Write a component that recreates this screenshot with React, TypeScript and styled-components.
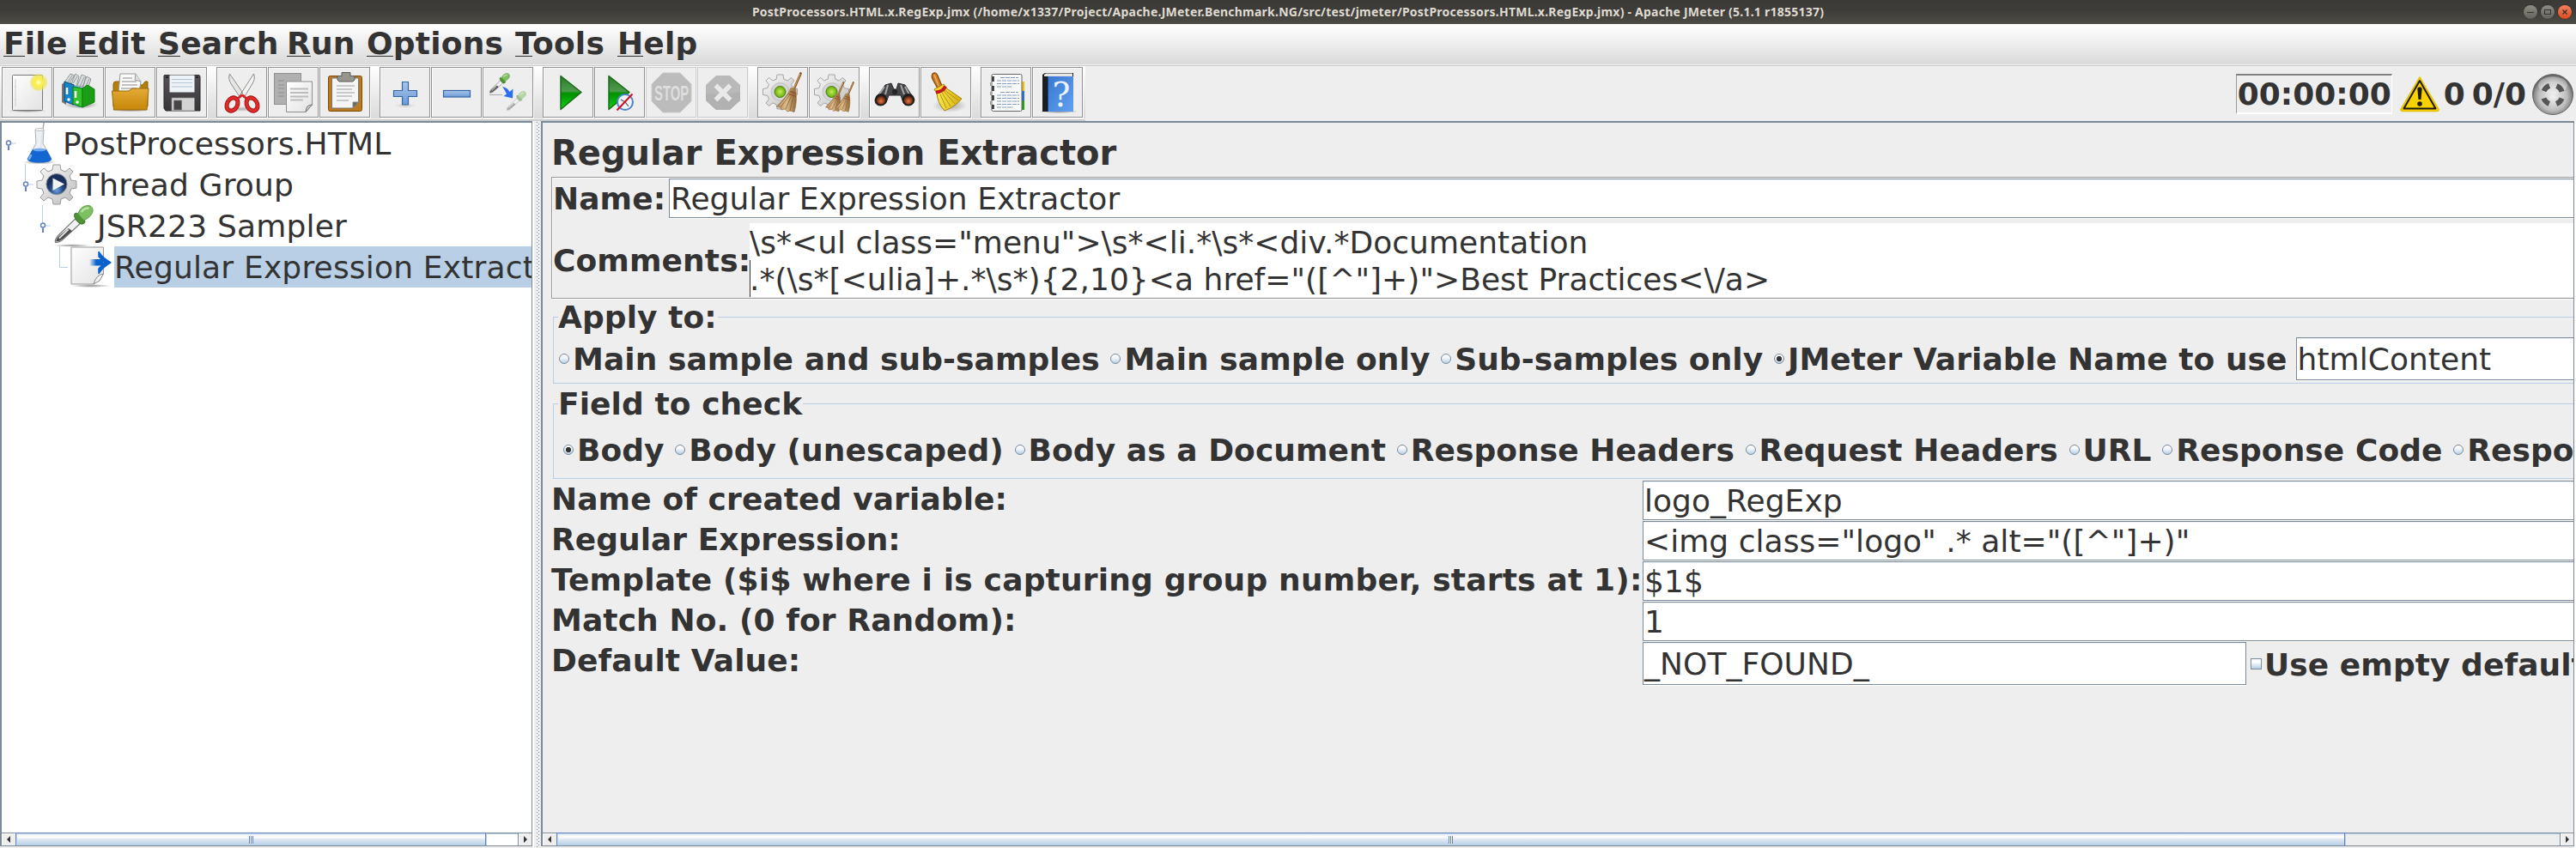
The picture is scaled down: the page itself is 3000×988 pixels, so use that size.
import React from 'react';
import styled, { createGlobalStyle, css } from 'styled-components';

const steel = '#7a8a99';
const ink = '#333333';
const pale = '#b8cfe5';

const GlobalStyle = createGlobalStyle`
  * { box-sizing: border-box; }
  html, body { margin: 0; padding: 0; background: #fff; overflow: hidden; }
  body { font-family: "DejaVu Sans", sans-serif; font-size: 36px; color: ${ink}; }
`;

const Window = styled.div`
  width: 3000px;
  height: 988px;
  display: flex;
  flex-direction: column;
  background: #eeeeee;
  overflow: hidden;
  white-space: nowrap;
`;

/* ---------- title bar ---------- */
const TitleBar = styled.header`
  height: 28px;
  flex: none;
  display: grid;
  grid-template-columns: 1fr auto 1fr;
  align-items: center;
  background: linear-gradient(#3b3a36, #3d3c38 40%, #4d4b45);
`;
const WindowTitle = styled.h1`
  grid-column: 2;
  margin: 0;
  font: bold 14px/28px "Noto Sans", sans-serif;
  letter-spacing: 0.23px;
  color: #dfdbd2;
`;
const WindowButtons = styled.div`
  grid-column: 3;
  justify-self: end;
  display: flex;
  gap: 4px;
  padding-right: 5px;
`;
const RoundButton = styled.span<{ $close?: boolean }>`
  width: 16px;
  height: 16px;
  border-radius: 50%;
  display: flex;
  background: ${p => (p.$close ? 'linear-gradient(#f58162, #df4a1c)' : 'linear-gradient(#8e8c84, #63625c)')};
  box-shadow: 0 0 0 0.5px #2d2c29;
`;

/* ---------- menu bar ---------- */
const MenuBar = styled.nav`
  height: 49px;
  flex: none;
  display: flex;
  padding-left: 4px;
  background: linear-gradient(#ffffff, #dadada 47px, #eeeeee 47px, #eeeeee 48px, #cccccc 48px);
`;
const MenuItem = styled.span<{ $width: number }>`
  width: ${p => p.$width}px;
  font-weight: bold;
  line-height: 46px;
  letter-spacing: 0.2px;
`;
const Mnemonic = styled.span`
  background: linear-gradient(${ink}, ${ink}) 0 35px / 100% 1px no-repeat;
`;

/* ---------- tool bar ---------- */
const ToolRow = styled.div`
  height: 64px;
  flex: none;
  display: flex;
  justify-content: space-between;
`;
const Tools = styled.div`
  width: 1264px;
  padding: 1px 0 0 2px;
  display: flex;
  gap: 11px;
  background: linear-gradient(#ffffff, #dadada 61px, #f4f4f4 61px, #f4f4f4 62px, #cccccc 62px);
`;
const ToolGroup = styled.div`
  display: flex;
  gap: 1px;
`;
const ToolButton = styled.button<{ $off?: boolean }>`
  width: 59px;
  height: 59px;
  margin: 0;
  padding: 5px 0 0 5px;
  display: flex;
  align-items: flex-start;
  border: 1px solid ${p => (p.$off ? '#cccccc' : '#919191')};
  background: #eeeeee;
  box-shadow: 1px 1px 0 ${p => (p.$off ? '#f2f2f2' : '#ffffff')}, inset 1px 1px 0 ${p => (p.$off ? '#eee' : '#fafafa')};
`;
const Glyph = styled.svg`
  display: block;
  flex: none;
  overflow: visible;
`;
const Status = styled.div`
  display: flex;
  align-items: center;
  font-weight: bold;
  padding: 1px 3px 0 0;
`;
const Timer = styled.div`
  width: 182px;
  height: 47px;
  margin-right: 9px;
  padding-left: 1px;
  line-height: 44px;
  border: 1px solid #999;
  border-top-width: 2px;
  border-top-color: #808080;
  border-right-color: #fff;
  border-bottom: 2px solid #fff;
`;
const Count = styled.span<{ $left: number; $right: number }>`
  margin-left: ${p => p.$left}px;
  margin-right: ${p => p.$right}px;
  line-height: 44px;
`;

/* ---------- split panes ---------- */
const Split = styled.main`
  height: 847px;
  flex: none;
  display: flex;
`;
const Pane = styled.section<{ $width: number; $white?: boolean }>`
  width: ${p => p.$width}px;
  height: 845px;
  flex: none;
  display: flex;
  flex-direction: column;
  overflow: hidden;
  border: solid ${steel};
  border-width: 2px 1px 0 2px;
  background: ${p => (p.$white ? '#fff' : '#eee')};
`;
const Divider = styled.div`
  width: 10px;
  flex: none;
  border-left: 2px solid #fff;
  background:
    conic-gradient(from 0deg at 1px 1px, transparent 270deg, ${steel} 270deg) 3px 1px / 4px 4px repeat-y,
    conic-gradient(from 0deg at 1px 1px, transparent 270deg, ${steel} 270deg) 5px 3px / 4px 4px repeat-y,
    #eeeeee;
`;
const RightEdge = styled.div`
  flex: 1;
  background: #fff;
`;
const PaneBody = styled.div`
  height: 827px;
  flex: none;
  overflow: hidden;
`;

/* ---------- tree ---------- */
const TreeRow = styled.div<{ $depth: number }>`
  height: 48px;
  display: flex;
  padding-left: ${p => p.$depth * 20}px;
`;
const TreeLabel = styled.span<{ $selected?: boolean }>`
  flex: 1;
  height: 48px;
  line-height: 50px;
  letter-spacing: 0.18px;
  ${p => p.$selected && css`background: ${pale};`}
`;
const IconSlot = styled.span`
  width: 51px;
  flex: none;
`;

/* ---------- scroll bar ---------- */
const ScrollBar = styled.div`
  height: 16px;
  flex: none;
  display: flex;
  border: solid ${steel};
  border-width: 1px 0;
`;
const Arrow = styled.span<{ $right?: boolean }>`
  width: 16px;
  flex: none;
  display: flex;
  align-items: center;
  justify-content: center;
  background: #eee;
  box-shadow: inset 1px 1px 0 #fff;
  &::before {
    content: '';
    border: 4px solid transparent;
    border-width: 4px 0;
    ${p => (p.$right ? `border-left: 4px solid ${ink};` : `border-right: 4px solid ${ink};`)}
  }
  ${p => p.$right && `border-left: 1px solid ${steel};`}
`;
const Thumb = styled.span<{ $width: number }>`
  width: ${p => p.$width}px;
  height: 16px;
  margin: -1px 0;
  flex: none;
  display: flex;
  align-items: center;
  justify-content: center;
  border: 1px solid #6382bf;
  border-bottom-color: ${steel};
  box-shadow: inset 1px 1px 0 #c8d9ee;
  background: linear-gradient(#dfe8f3, #ffffff 30%, #dde8f3 50%, #b8cfe5);
  &::before {
    content: '';
    width: 5px;
    height: 9px;
    background: repeating-linear-gradient(90deg, #6382bf 0 1px, #fff 1px 2px);
  }
`;
const Track = styled.span`
  flex: 1;
  box-shadow: inset 1px 1px 0 ${pale};
`;

/* ---------- editor form ---------- */
const Editor = styled.div`
  padding: 6px 0 0 10px;
`;
const EditorTitle = styled.h2`
  margin: 0;
  height: 57px;
  font-size: 40px;
  line-height: 58px;
`;
const Etched = styled.div`
  height: 142px;
  display: flex;
  flex-direction: column;
  gap: 6px;
  padding: 1px 0 0 1px;
  border: 1px solid #999;
  border-right: 0;
  box-shadow: inset 1px 1px 0 #fff, 0 1px 0 #fff;
`;
const Line = styled.div`
  display: flex;
`;
const Label = styled.label<{ $width: number; $height?: number; $spacing?: number }>`
  width: ${p => p.$width}px;
  height: ${p => p.$height ?? 42}px;
  flex: none;
  font-weight: bold;
  letter-spacing: ${p => p.$spacing ?? 0.1}px;
  line-height: ${p => (p.$height ?? 42) + 2}px;
`;
const Field = styled.div<{ $height?: number; $width?: number }>`
  flex: ${p => (p.$width ? 'none' : '1')};
  ${p => p.$width && `width: ${p.$width}px;`}
  height: ${p => p.$height ?? 46}px;
  line-height: ${p => p.$height ?? 46}px;
  padding-left: 1px;
  letter-spacing: 0.04px;
  background: #fff;
  border: solid ${steel};
  border-width: 1px ${p => (p.$width ? 1 : 0)}px 1px 1px;
  box-shadow: 0 1px 0 #fff, inset 0 1px 0 #eef2f6;
`;
const TextArea = styled.div`
  flex: 1;
  height: 86px;
  padding-top: 0.5px;
  line-height: 43px;
  letter-spacing: 0.03px;
  background: linear-gradient(${ink}, ${ink}) 0 43px / 1px 43px no-repeat, #fff;
`;
const Group = styled.fieldset<{ $body: number; $gap: number; $indent: number }>`
  margin: ${p => p.$gap}px 0 0 2px;
  padding: 0 0 0 ${p => p.$indent}px;
  min-width: 0;
  border: 1px solid ${pale};
  border-right: 0;
  > div { height: ${p => p.$body}px; }
`;
const Legend = styled.legend<{ $indent: number }>`
  height: 42px;
  margin-left: -${p => p.$indent - 5}px;
  padding: 0 1px 0 0;
  font-weight: bold;
  line-height: 44px;
  letter-spacing: 0.08px;
`;
const Options = styled.div`
  display: flex;
  align-items: center;
`;
const Dot = styled.i<{ $on?: boolean }>`
  width: 12px;
  height: 12px;
  margin-top: -2px;
  flex: none;
  border-radius: 50%;
  border: 1px solid ${steel};
  background: ${p => (p.$on ? `radial-gradient(circle, ${ink} 0 2.8px, transparent 3.4px),` : '')}
    linear-gradient(#ffffff, #f2f6fb 40%, #b8cfe5);
`;
const Option = styled.span<{ $after?: number }>`
  display: flex;
  align-items: center;
  flex: none;
  gap: 4px;
  padding-top: 2px;
  font-weight: bold;
  line-height: 50px;
  letter-spacing: 0.06px;
  margin-right: ${p => p.$after ?? 12.7}px;
`;
const Box = styled.i`
  width: 13px;
  height: 13px;
  margin-top: -2px;
  flex: none;
  border: 1px solid ${steel};
  background: linear-gradient(#f4f8fb, #ffffff 30%, #b8cfe5);
`;
const FormGrid = styled.div`
  display: flex;
  flex-direction: column;
  gap: 1px;
  padding-top: 2px;
`;
const CheckLabel = styled.span`
  display: flex;
  align-items: center;
  flex: none;
  gap: 3px;
  height: 50px;
  padding: 2px 0 0 5px;
  font-weight: bold;
  letter-spacing: 0.06px;
`;

/* ---------- drawings ---------- */
const Icon = ({ children, size = 48 }: { children: React.ReactNode; size?: number }) => (
  <Glyph width={size} height={size} viewBox="0 0 48 48">{children}</Glyph>
);

const Palette = styled.svg`
  display: block;
  flex: none;
`;
const Defs = () => (
  <Palette width="0" height="0">
    <defs>
      <linearGradient id="page" x2="1" y2="1"><stop stopColor="#fff" /><stop offset="1" stopColor="#e2e2e2" /></linearGradient>
      <linearGradient id="metal" x2="1" y2="1"><stop stopColor="#fafafa" /><stop offset="1" stopColor="#bdbdbd" /></linearGradient>
      <linearGradient id="folder" x2="0" y2="1"><stop stopColor="#e4ab35" /><stop offset="1" stopColor="#c68608" /></linearGradient>
      <linearGradient id="play" x2="0" y2="1"><stop stopColor="#2b7a2b" /><stop offset=".45" stopColor="#4d9a4d" /><stop offset=".52" stopColor="#009000" /><stop offset="1" stopColor="#12d012" /></linearGradient>
      <linearGradient id="dark" x2="0" y2="1"><stop stopColor="#555257" /><stop offset="1" stopColor="#39373a" /></linearGradient>
      <linearGradient id="blue" x2="0" y2="1"><stop stopColor="#a9c5ea" /><stop offset="1" stopColor="#6d9bd6" /></linearGradient>
      <linearGradient id="book" x2="1" y2="1"><stop stopColor="#3a78cf" /><stop offset="1" stopColor="#62a0f2" /></linearGradient>
      <linearGradient id="straw" x2="1" y2="0"><stop stopColor="#b98f5c" /><stop offset=".5" stopColor="#dcbb8b" /><stop offset="1" stopColor="#8f6534" /></linearGradient>
      <linearGradient id="yellow" x2="1" y2="0"><stop stopColor="#f7e94a" /><stop offset="1" stopColor="#d5ae10" /></linearGradient>
      <linearGradient id="arrow" x2="1" y2="0"><stop stopColor="#0a62cc" stopOpacity="0" /><stop offset=".5" stopColor="#0a62cc" /></linearGradient>
      <radialGradient id="glow"><stop stopColor="#fffde0" /><stop offset=".35" stopColor="#fbf04a" /><stop offset=".75" stopColor="#f0e64a" stopOpacity=".75" /><stop offset="1" stopColor="#e8e070" stopOpacity="0" /></radialGradient>
      <radialGradient id="ball" cy=".55"><stop stopColor="#f2f2f2" /><stop offset=".7" stopColor="#bdbdbd" /><stop offset=".92" stopColor="#8c8c8c" /><stop offset="1" stopColor="#666" /></radialGradient>
      <radialGradient id="lens" cy=".65"><stop stopColor="#e07c48" /><stop offset=".7" stopColor="#7e3413" /><stop offset="1" stopColor="#2a1a14" /></radialGradient>
      <radialGradient id="navy" cy=".8"><stop stopColor="#6fa0dc" /><stop offset=".6" stopColor="#274a86" /><stop offset="1" stopColor="#1a2e5a" /></radialGradient>
      <radialGradient id="green"><stop stopColor="#c5ef52" /><stop offset="1" stopColor="#62ad0c" /></radialGradient>
      <radialGradient id="shade"><stop stopColor="#000" stopOpacity=".45" /><stop offset="1" stopColor="#000" stopOpacity="0" /></radialGradient>
    </defs>
  </Palette>
);

const Gear = ({ cx = 24, cy = 24, r = 23 }: { cx?: number; cy?: number; r?: number }) => (
  <g transform={`translate(${cx} ${cy}) scale(${r / 23})`} fill="url(#metal)" stroke="#999" strokeWidth="1">
    <path d="M-4-23H4L5-17 10-15 15-19 19-15 15-10 17-5 23-4V4L17 5 15 10 19 15 15 19 10 15 5 17 4 23H-4L-5 17-10 15-15 19-19 15-15 10-17 5-23 4V-4L-17-5-15-10-19-15-15-19-10-15-5-17Z" strokeLinejoin="round" />
    <circle r="12" fill="#d5d5d5" stroke="#bbb" />
  </g>
);

const Broom = ({ x = 0, y = 0, s = 1 }: { x?: number; y?: number; s?: number }) => (
  <g transform={`translate(${x} ${y}) scale(${s})`}>
    <path d="M44.5 1.5 36.5 20" stroke="#8a5a28" strokeWidth="2.8" strokeLinecap="round" />
    <path d="M44 2 36.5 19" stroke="#d8ab70" strokeWidth="1" />
    <path d="M33 18.5 38.500 20C40 29 39.500 38 37 46.500L32 45 29 46 26 43 22 44 21 41 16.500 40C24 34 29 27 33 18.500Z" fill="url(#straw)" stroke="#94703f" strokeWidth=".7" />
    <path d="M35 22 21 41M36 22 27 43M37 23 32 45M34 21 18 39" stroke="#80592b" strokeWidth=".7" fill="none" />
    <path d="M32 22.500 39 25M30.500 25.500 39 28.500" stroke="#a03f1d" strokeWidth=".9" />
  </g>
);

const Dropper = ({ faded }: { faded?: boolean }) => (
  <g opacity={faded ? 0.5 : 1} strokeLinejoin="round">
    <path d="M26 17 32 22.500 12 41Q8 45 3 45 1 43 5 37.500Z" fill="#f2f2f2" stroke="#777" strokeWidth="1.200" />
    <path d="M18 28 22.500 31 11 41Q7 44 3.500 44 2.500 42 6 38Z" fill="#4d4d4d" />
    <path d="M18 29.500 7 40" stroke="#e8e8e8" strokeWidth="1.800" />
    <path d="M25.500 10.500Q28 9 30 11L37 18Q39 21 36.500 22.500 33 24 31 22L26.500 17Q24 14 25.500 10.500Z" fill="#4f9235" stroke="#2f6a20" strokeWidth=".8" />
    <path d="M29.500 11C31 4 38-.5 44 1.500 50 5 47 14 36.500 18.500Z" fill="#7fbf63" stroke="#55923f" strokeWidth=".9" />
    <path d="M34 8Q37 4 41.500 4" stroke="#b9e3a3" strokeWidth="2.500" fill="none" strokeLinecap="round" />
  </g>
);

const Octagon = 'M14 1H34L47 14V34L34 47H14L1 34V14Z';

const NewIcon = () => (
  <Icon>
    <ellipse cx="24" cy="45" rx="23" ry="2" fill="url(#shade)" />
    <rect x="6.500" y="3.500" width="35" height="41" rx="1" fill="url(#page)" stroke="#777" />
    <path d="M10 8V40M9 17h2M9 32h2" stroke="#ccc" />
    <circle cx="37" cy="12" r="11" fill="url(#glow)" />
  </Icon>
);
const TemplatesIcon = () => (
  <Icon>
    <ellipse cx="26" cy="38" rx="20" ry="5" fill="url(#shade)" />
    <path d="M4 14 9 11V38L4 35Z" fill="#777" />
    <path d="M7 12 14 2 19 4 15 14ZM13 12 20 2 24 5 21 17ZM22 16 27 3 32 5 29 17ZM28 17 33 5 38 8 34 20Z" fill="#d9dcdc" stroke="#8d9494" strokeWidth=".9" />
    <path d="M10 13 16 4M17 13 22 5M25 17 30 6M31 18 36 8" stroke="#8d9494" strokeWidth=".9" />
    <path d="M7 11 18 15V38L7 34Z" fill="#1184cb" stroke="#05507e" />
    <path d="M18 16 28 18V39L24 41 18 38Z" fill="#32a4df" />
    <path d="M17 17 28 19V41L17 37Z" fill="#33c32a" stroke="#147c10" />
    <path d="M28 19 34 15 42 20V35L28 41Z" fill="#1b9d18" stroke="#147c10" />
    <path d="M10 18V26M20 22V30" stroke="#fff" strokeWidth="2.500" />
    <circle cx="12" cy="32" r="1.800" fill="#fff" /><circle cx="22" cy="35" r="1.800" fill="#fff" />
  </Icon>
);
const OpenIcon = () => (
  <Icon>
    <ellipse cx="24" cy="44" rx="23" ry="2.500" fill="url(#shade)" />
    <path d="M4 14Q4 11 7 11H12L15 15H38L41 11H44V40H4Z" fill="#b47f0d" stroke="#8b6006" />
    <path d="M12 2H30L36 11 34 24H10Z" fill="#fafafa" stroke="#999" />
    <path d="M30 2 29 9 36 11" fill="#ddd" stroke="#999" />
    <path d="M15 7H26M14 11H31M14 15H32M13 19H31" stroke="#888" strokeWidth="1.200" />
    <path d="M2.500 22H22L26 19H45L43 44H4.500Z" fill="url(#folder)" stroke="#96690c" strokeLinejoin="round" />
  </Icon>
);
const SaveIcon = () => (
  <Icon>
    <path d="M4 3.500H44L45 5V45H5L3 42V4Z" fill="url(#dark)" stroke="#29282a" />
    <rect x="9.500" y="3.500" width="29" height="20" fill="#eef3f7" />
    <path d="M12 8.500H36M12 12.500H36M12 17H36" stroke="#b5c3d1" />
    <path d="M5 6h3M40 6h3" stroke="#222" strokeWidth="2" />
    <rect x="12" y="30" width="26.500" height="15" fill="#d4d4d4" stroke="#888" strokeWidth=".7" />
    <rect x="14.500" y="33" width="9" height="11" fill="#464447" stroke="#777" strokeWidth=".7" />
  </Icon>
);
const CutIcon = () => (
  <Icon>
    <ellipse cx="24" cy="43" rx="20" ry="3" fill="url(#shade)" opacity=".6" />
    <path d="M9.500 2Q7 8 12 15L22 30 26 26Z" fill="#e6e6e4" stroke="#8c8c8a" />
    <path d="M37.500 2Q40 8 35 15L26 30 22 26Z" fill="#f2f2f0" stroke="#8c8c8a" />
    <circle cx="24" cy="24.500" r="1" fill="#777" />
    <g fill="none"><ellipse cx="12.500" cy="37.500" rx="6" ry="8" transform="rotate(28 12.500 37.500)" stroke="#9c0e0e" strokeWidth="5" /><ellipse cx="35.500" cy="37.500" rx="6" ry="8" transform="rotate(-28 35.500 37.500)" stroke="#9c0e0e" strokeWidth="5" /><ellipse cx="12.500" cy="37.500" rx="6" ry="8" transform="rotate(28 12.500 37.500)" stroke="#dd2a2a" strokeWidth="3.400" /><ellipse cx="35.500" cy="37.500" rx="6" ry="8" transform="rotate(-28 35.500 37.500)" stroke="#dd2a2a" strokeWidth="3.400" /></g>
    <path d="M17 31 22 26 26 26 31 31 28 32 24 28 20 32Z" fill="#d52424" />
  </Icon>
);
const CopyIcon = () => (
  <Icon>
    <rect x="1.500" y="1.500" width="31" height="36" fill="#b0b0b0" stroke="#909090" />
    <path d="M6 10h7M6 15h7M6 19h7M6 24h7M6 28h7" stroke="#999" strokeWidth="1.500" />
    <path d="M15.500 11H45.500V38L38 46.500H15.500Z" fill="url(#page)" stroke="#8e8e8e" strokeLinejoin="round" />
    <path d="M38 46.500Q38 38 45.500 38Z" fill="#c8c8c8" stroke="#777" />
    <path d="M20 19.500H41M20 24H41M20 28.500H41M20 32.500H35" stroke="#bcbcbc" strokeWidth="1.800" />
  </Icon>
);
const PasteIcon = () => (
  <Icon>
    <rect x="4.500" y="4.500" width="39" height="41" rx="2" fill="#bb7a1f" stroke="#7b4a08" />
    <path d="M8.500 7H39.500V35L33 42H8.500Z" fill="#f5f5f5" stroke="#777" />
    <path d="M33 42V35H39.500Z" fill="#666" stroke="#888" />
    <path d="M14 16H35M14 20H32M14 24H35M14 28H32M14 33H28" stroke="#bbb" strokeWidth="1.600" />
    <path d="M15 4.500H20V.500H30V4.500H35V9L33 11H17L15 9Z" fill="#96968f" stroke="#5c5c57" />
  </Icon>
);
const PlusIcon = () => (
  <Icon>
    <ellipse cx="24" cy="39" rx="13" ry="3" fill="url(#shade)" opacity=".3" />
    <path d="M20.500 11.500H27.500V21.500H37.500V28.500H27.500V38H20.500V28.500H10.500V21.500H20.500Z" fill="url(#blue)" stroke="#3465a4" strokeWidth="1.200" />
  </Icon>
);
const MinusIcon = () => (
  <Icon><rect x="8.500" y="21.500" width="31" height="7.500" fill="url(#blue)" stroke="#3465a4" strokeWidth="1.200" /></Icon>
);
const ToggleIcon = () => (
  <Icon>
    <g transform="translate(1 1) scale(.52)"><Dropper /></g>
    <g transform="translate(21 22) scale(.5)"><Dropper faded /></g>
    <path d="M2 26.500H17" stroke="#999" strokeWidth=".8" />
    <path d="M17 17Q23 18 25.500 23L29.500 19.500 29 30.500 18.500 28 22 25.500Q20 21 17 17Z" fill="#2b6ff0" />
  </Icon>
);
const PlayIcon = () => (
  <Icon>
    <path d="M15 4.500 39 23.500 15 43.500Z" fill="url(#play)" stroke="#156a15" strokeWidth="1.400" strokeLinejoin="round" />
  </Icon>
);
const PlayNoPauseIcon = () => (
  <Icon>
    <path d="M11 4.500 35 23.500 11 43.500Z" fill="url(#play)" stroke="#156a15" strokeWidth="1.400" strokeLinejoin="round" />
    <circle cx="30" cy="35" r="9" fill="#eef3fa" stroke="#4f86c6" strokeWidth="2" />
    <path d="M25 32 30 35 34 40M30 35 33 31" stroke="#555" strokeWidth="1.200" fill="none" />
    <path d="M20.500 44.500 38.500 25.500" stroke="#d40d1c" strokeWidth="2" />
  </Icon>
);
const StopWord = styled.text`
  font: bold 18px "Liberation Sans", sans-serif;
  fill: #dedede;
`;
const StopIcon = () => (
  <Icon>
    <path d={Octagon} fill="#bcbcbc" stroke="#c9c9c9" />
    <StopWord x="0" y="0" textLength="33" lengthAdjust="spacingAndGlyphs" transform="translate(4 33) scale(1.220 1.350)">STOP</StopWord>
  </Icon>
);
const ShutdownIcon = () => (
  <Icon>
    <path d="M16 4H32L44 15V33L32 44H16L4 33V15Z" fill="#b9b9b9" />
    <path d="M4 25Q24 28 44 23V33L32 44H16L4 33Z" fill="#b1b1b1" />
    <path d="M15.500 15.500 32.500 32.500M32.500 15.500 15.500 32.500" stroke="#e9e9e9" strokeWidth="5.500" />
  </Icon>
);
const ClearIcon = () => (
  <Icon>
    <Gear cx={20.500} cy={23} r={20} />
    <circle cx="20.500" cy="23" r="6.500" fill="url(#green)" stroke="#4c7d10" />
    <Broom />
  </Icon>
);
const ClearAllIcon = () => (
  <Icon>
    <Gear cx={20.500} cy={23} r={20} />
    <circle cx="20.500" cy="23" r="6.500" fill="url(#green)" stroke="#4c7d10" />
    <Broom x={1} y={11} s={0.75} />
    <Broom x={12} y={11} s={0.76} />
  </Icon>
);
const SearchIcon = () => (
  <Icon>
    <path d="M13 15 20 13 23 20H26L28 13 36 15 47 32Q46 39 40 39T33 33L31 27H17L15 33Q13 39 7 39T1 32Z" fill="#454547" stroke="#2b2b2d" />
    <path d="M12 17 6 26M16 15 13 26M36 17 41 26M31 15 35 26" stroke="#a5a5a8" strokeWidth="2" />
    <circle cx="24" cy="23" r="3" fill="#242426" />
    <circle cx="8" cy="32" r="6.300" fill="url(#lens)" stroke="#1d1d1f" strokeWidth="1.500" />
    <circle cx="40" cy="32" r="6.300" fill="url(#lens)" stroke="#1d1d1f" strokeWidth="1.500" />
  </Icon>
);
const ResetIcon = () => (
  <Icon>
    <ellipse cx="28" cy="39" rx="20" ry="8" fill="url(#shade)" opacity=".7" />
    <path d="M8 2Q12-1 14 4L19 16 14 19 9 10Q6 5 8 2Z" fill="#cc7a1e" stroke="#80450a" strokeWidth="1.200" />
    <path d="M10 3 15 16" stroke="#eab36a" strokeWidth="1.500" />
    <path d="M13 23 23 18 42 31Q35 40 22 45Q13 35 13 23Z" fill="url(#yellow)" stroke="#a3820a" />
    <path d="M17 26 24 42M19 24 29 40M21 22 34 37M22 21 38 33" stroke="#a3820a" strokeWidth=".8" />
    <path d="M10 20 21 14 24 19 13 25Z" fill="#f2d22c" stroke="#a3820a" />
    <path d="M12 23.500Q20 23 23 16.500" stroke="#c4161c" strokeWidth="4" fill="none" />
  </Icon>
);
const LogIcon = () => (
  <Icon>
    <path d="M40 11H45V22H40Z" fill="#f2bc14" /><path d="M40 22H45V33H40Z" fill="#2d6fd6" /><path d="M40 33H45V44H40Z" fill="#27a014" />
    <rect x="7" y="2.500" width="35" height="43" rx="1.500" fill="#fafafa" stroke="#666" />
    <path d="M8.500 5v6M8.500 16v6M8.500 27v6M8.500 38v5" stroke="#333" strokeWidth="2.600" />
    <path d="M5.500 12v4M5.500 23v4M5.500 34v4" stroke="#999" />
    <path d="M17 6.500H38M13 10H39M13 13.500H39M13 17H30M17 23.500H38M13 27H39M13 30.500H39M13 34H39M13 37.500H39M13 41H32" stroke="#829bc4" strokeWidth="1.200" strokeDasharray="5 1" />
  </Icon>
);
const HelpMark = styled.text`
  font: 39px "DejaVu Serif", serif;
  fill: #eaf3ff;
`;
const HelpIcon = () => (
  <Icon>
    <ellipse cx="25" cy="46" rx="23" ry="2" fill="url(#shade)" />
    <path d="M6 3 9 1H42V44L38 46H6Z" fill="#1b1d20" />
    <path d="M8 3 10 1.500H41V5H8Z" fill="#e5e5e5" />
    <path d="M13 5H42V46H13Z" fill="url(#book)" />
    <path d="M12.500 5V46" stroke="#134a97" />
    <HelpMark x="17.500" y="40">?</HelpMark>
  </Icon>
);

const FlaskIcon = () => (
  <Icon>
    <ellipse cx="24" cy="46" rx="20" ry="2.500" fill="url(#shade)" />
    <path d="M29 0 25 32" stroke="#aaa" strokeWidth="1.500" />
    <path d="M19 8Q24 10 29 8L28 24 38 42Q38 46 24 46T10 42L20 24Z" fill="#e7edf2" fillOpacity=".85" stroke="#a9b2ba" />
    <path d="M16 31Q24 34 32 31L38 42Q38 46.500 24 46.500T10 42Z" fill="#1467d2" />
    <ellipse cx="24" cy="31.500" rx="7.500" ry="1.800" fill="#6ca9ee" />
    <path d="M14 38 12 42" stroke="#7ab4f3" strokeWidth="2.500" strokeLinecap="round" />
    <ellipse cx="24" cy="8" rx="5" ry="1.500" fill="#f8f8f8" stroke="#aaa" strokeWidth=".7" />
  </Icon>
);
const ThreadIcon = () => (
  <Icon>
    <Gear />
    <circle cx="24" cy="23.500" r="12" fill="url(#navy)" stroke="#7a8698" />
    <path d="M19.500 16.500 33 23.500 19.500 31Z" fill="#f2f2f2" />
  </Icon>
);
const SamplerIcon = () => (
  <Icon><ellipse cx="22" cy="47" rx="22" ry="1.800" fill="url(#shade)" /><g transform="translate(0 -.5) scale(.98)"><Dropper /></g></Icon>
);
const PostIcon = () => (
  <Icon>
    <ellipse cx="24" cy="46" rx="23" ry="2" fill="url(#shade)" />
    <path d="M1 1H38.500V32L27 44H1Z" fill="url(#page)" stroke="#999" />
    <path d="M27 44Q30 33 38.500 32L34 40Z" fill="#f2f2f2" stroke="#888" />
    <path d="M22 15H38V22.500H22Z" fill="url(#arrow)" />
    <path d="M33 6.500Q38 14 47 18.800Q38 24 33 31.500V26L40 18.800 33 12Z" fill="#0a62cc" stroke="#0a62cc" strokeWidth="1.500" strokeLinejoin="round" />
  </Icon>
);

/* Knob and guide lines drawn to the left of each tree icon. */
const HandleSlot = styled.span<{ $width: number }>`
  width: ${p => p.$width}px;
  flex: none;
`;
const KnobShape = () => (
  <>
    <path d="M10 24H17" stroke={pale} />
    <path d="M8 26.500V32" stroke="#6382bf" strokeWidth="2" />
    <circle cx="8" cy="23.500" r="2.500" fill="#fff" stroke="#6382bf" strokeWidth="1.500" />
  </>
);
const Knob = () => (
  <HandleSlot $width={20}>
    <Glyph width="20" height="48"><KnobShape /></Glyph>
  </HandleSlot>
);
const KnobWithGuide = () => (
  <HandleSlot $width={20}>
    <Glyph width="20" height="48"><path d="M7.500 0V20" stroke={pale} /><KnobShape /></Glyph>
  </HandleSlot>
);
const LeafGuide = () => (
  <HandleSlot $width={20}>
    <Glyph width="20" height="48"><path d="M7.500 0V24.500H17" stroke={pale} fill="none" /></Glyph>
  </HandleSlot>
);

const WarningIcon = () => (
  <Glyph width="46" height="41" viewBox="0 0 46 41">
    <path d="M23 1 45 38.500Q45 40.500 43 40.500H3Q1 40.500 1 38.500Z" fill="#f8d000" stroke="#e8c400" strokeWidth="1.500" strokeLinejoin="round" />
    <path d="M23 5 41.500 37.500H4.500Z" fill="#f9d100" stroke="#1c1a12" strokeWidth="2" strokeLinejoin="round" />
    <path d="M20.300 14Q23 10.500 25.700 14L24.500 27H21.500Z" fill="#1c1a12" />
    <circle cx="23" cy="32" r="2.800" fill="#1c1a12" />
  </Glyph>
);
const BallIcon = () => (
  <Icon>
    <circle cx="24" cy="24" r="23.500" fill="url(#ball)" stroke="#6b6b6b" />
    <ellipse cx="24" cy="13" rx="17" ry="10" fill="#fff" opacity=".3" />
    <circle cx="24" cy="24.500" r="11.300" fill="none" stroke="#555" strokeWidth="6" strokeDasharray="9.200 8.550" strokeDashoffset="-4.200" />
  </Icon>
);

const menus: [string, number][] = [['File', 85], ['Edit', 95], ['Search', 150], ['Run', 93], ['Options', 173], ['Tools', 119], ['Help', 110]];

const toolGroups: { icon: React.FC; off?: boolean }[][] = [
  [{ icon: NewIcon }, { icon: TemplatesIcon }, { icon: OpenIcon }, { icon: SaveIcon }],
  [{ icon: CutIcon }, { icon: CopyIcon }, { icon: PasteIcon }],
  [{ icon: PlusIcon }, { icon: MinusIcon }, { icon: ToggleIcon }],
  [{ icon: PlayIcon }, { icon: PlayNoPauseIcon }, { icon: StopIcon, off: true }, { icon: ShutdownIcon, off: true }],
  [{ icon: ClearIcon }, { icon: ClearAllIcon }],
  [{ icon: SearchIcon }, { icon: ResetIcon }],
  [{ icon: LogIcon }, { icon: HelpIcon }],
];

const tree = [
  { label: 'PostProcessors.HTML', icon: FlaskIcon, guide: Knob },
  { label: 'Thread Group', icon: ThreadIcon, guide: KnobWithGuide },
  { label: 'JSR223 Sampler', icon: SamplerIcon, guide: KnobWithGuide },
  { label: 'Regular Expression Extractor', icon: PostIcon, guide: LeafGuide, selected: true },
];

const checks = ['Body', 'Body (unescaped)', 'Body as a Document', 'Response Headers', 'Request Headers', 'URL', 'Response Code', 'Response Message'];

const rows: { name: string; value: string; spacing?: number }[] = [
  { name: 'Name of created variable:', value: 'logo_RegExp' },
  { name: 'Regular Expression:', value: '<img class="logo" .* alt="([^"]+)"', spacing: 0.03 },
  { name: 'Template ($i$ where i is capturing group number, starts at 1):', value: '$1$', spacing: 0.19 },
  { name: 'Match No. (0 for Random):', value: '1' },
];

export default function App() {
  return (
    <Window>
      <GlobalStyle />
      <Defs />
      <TitleBar>
        <WindowTitle>PostProcessors.HTML.x.RegExp.jmx (/home/x1337/Project/Apache.JMeter.Benchmark.NG/src/test/jmeter/PostProcessors.HTML.x.RegExp.jmx) - Apache JMeter (5.1.1 r1855137)</WindowTitle>
        <WindowButtons>
          <RoundButton><Glyph width="16" height="16"><path d="M4 8.500H12" stroke="#33322e" /></Glyph></RoundButton>
          <RoundButton><Glyph width="16" height="16"><rect x="4.500" y="5.500" width="7" height="5" fill="none" stroke="#33322e" /></Glyph></RoundButton>
          <RoundButton $close><Glyph width="16" height="16"><path d="M5.500 5.500 10.500 10.500M10.500 5.500 5.500 10.500" stroke="#33322e" strokeWidth="1.400" /></Glyph></RoundButton>
        </WindowButtons>
      </TitleBar>

      <MenuBar>
        {menus.map(([name, width]) => (
          <MenuItem key={name} $width={width}><Mnemonic>{name[0]}</Mnemonic>{name.slice(1)}</MenuItem>
        ))}
      </MenuBar>

      <ToolRow>
        <Tools>
          {toolGroups.map((group, g) => (
            <ToolGroup key={g}>
              {group.map(({ icon: Drawing, off }, i) => (
                <ToolButton key={i} $off={off}><Drawing /></ToolButton>
              ))}
            </ToolGroup>
          ))}
        </Tools>
        <Status>
          <Timer>00:00:00</Timer>
          <WarningIcon />
          <Count $left={5} $right={8}>0</Count>
          <Count $left={0} $right={7}>0/0</Count>
          <BallIcon />
        </Status>
      </ToolRow>

      <Split>
        <Pane $width={620} $white>
          <PaneBody>
            {tree.map(({ label, icon: Drawing, guide: Guide, selected }, depth) => (
              <TreeRow key={label} $depth={depth}>
                <Guide />
                <IconSlot><Drawing /></IconSlot>
                <TreeLabel $selected={selected}>{label}</TreeLabel>
              </TreeRow>
            ))}
          </PaneBody>
          <ScrollBar><Arrow /><Thumb $width={548} /><Track /><Arrow $right /></ScrollBar>
        </Pane>
        <Divider />
        <Pane $width={2368}>
          <PaneBody>
            <Editor>
              <EditorTitle>Regular Expression Extractor</EditorTitle>
              <Etched>
                <Line>
                  <Label $width={135} $height={46}>Name:</Label>
                  <Field>Regular Expression Extractor</Field>
                </Line>
                <Line>
                  <Label $width={229} $height={86}>Comments:</Label>
                  <TextArea>\s*&lt;ul class="menu"&gt;\s*&lt;li.*\s*&lt;div.*Documentation<br />.*(\s*[&lt;ulia]+.*\s*)&#123;2,10&#125;&lt;a href="([^"]+)"&gt;Best Practices&lt;\/a&gt;</TextArea>
                </Line>
              </Etched>

              <Group $body={56} $gap={0} $indent={6}>
                <Legend $indent={6}>Apply to:</Legend>
                <Options>
                  <Option><Dot />Main sample and sub-samples</Option>
                  <Option><Dot />Main sample only</Option>
                  <Option><Dot />Sub-samples only</Option>
                  <Option $after={10}><Dot $on />JMeter Variable Name to use</Option>
                  <Field $height={50}>htmlContent</Field>
                </Options>
              </Group>

              <Group $body={66} $gap={2} $indent={11}>
                <Legend $indent={11}>Field to check</Legend>
                <Options>
                  {checks.map((name, i) => (
                    <Option key={name}><Dot $on={i === 0} />{name}</Option>
                  ))}
                </Options>
              </Group>

              <FormGrid>
                {rows.map(({ name, value, spacing }) => (
                  <Line key={name}>
                    <Label $width={1271} $spacing={spacing}>{name}</Label>
                    <Field>{value}</Field>
                  </Line>
                ))}
                <Line>
                  <Label $width={1271}>Default Value:</Label>
                  <Field $height={50} $width={703}>_NOT_FOUND_</Field>
                  <CheckLabel><Box />Use empty default value?</CheckLabel>
                </Line>
              </FormGrid>
            </Editor>
          </PaneBody>
          <ScrollBar><Arrow /><Thumb $width={2083} /><Track /><Arrow $right /></ScrollBar>
        </Pane>
        <RightEdge />
      </Split>
    </Window>
  );
}
